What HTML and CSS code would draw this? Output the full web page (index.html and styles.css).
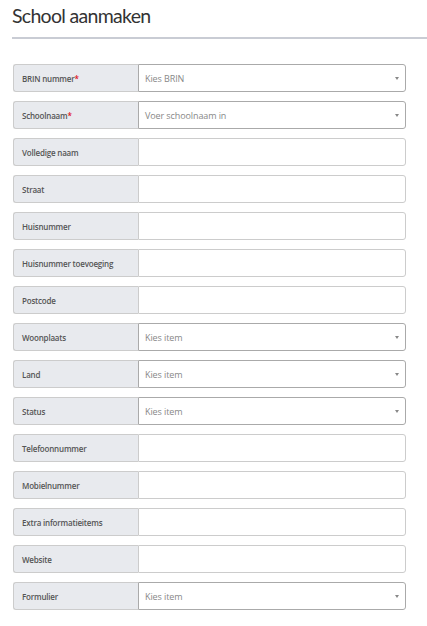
FILE: index.html
```html
<!DOCTYPE html>
<html lang="nl">
<head>
<meta charset="utf-8">
<title>School aanmaken</title>
<link rel="stylesheet" href="styles.css">
</head>
<body>
<div class="page">
  <h1 class="title">School aanmaken</h1>
  <div class="rule"></div>
  <form class="form">
    <div class="row"><div class="label">BRIN nummer<span class="req">*</span></div><div class="field select"><span class="ph">Kies BRIN</span><span class="caret"></span></div></div>
    <div class="row"><div class="label">Schoolnaam<span class="req">*</span></div><div class="field select"><span class="ph">Voer schoolnaam in</span><span class="caret"></span></div></div>
    <div class="row"><div class="label">Volledige naam</div><div class="field"></div></div>
    <div class="row"><div class="label">Straat</div><div class="field"></div></div>
    <div class="row"><div class="label">Huisnummer</div><div class="field"></div></div>
    <div class="row"><div class="label">Huisnummer toevoeging</div><div class="field"></div></div>
    <div class="row"><div class="label">Postcode</div><div class="field"></div></div>
    <div class="row"><div class="label">Woonplaats</div><div class="field select"><span class="ph">Kies item</span><span class="caret"></span></div></div>
    <div class="row"><div class="label">Land</div><div class="field select"><span class="ph">Kies item</span><span class="caret"></span></div></div>
    <div class="row"><div class="label">Status</div><div class="field select"><span class="ph">Kies item</span><span class="caret"></span></div></div>
    <div class="row"><div class="label">Telefoonnummer</div><div class="field"></div></div>
    <div class="row"><div class="label">Mobielnummer</div><div class="field"></div></div>
    <div class="row"><div class="label">Extra informatieitems</div><div class="field"></div></div>
    <div class="row"><div class="label">Website</div><div class="field"></div></div>
    <div class="row"><div class="label">Formulier</div><div class="field select"><span class="ph">Kies item</span><span class="caret"></span></div></div>
  </form>
</div>
</body>
</html>
```
FILE: styles.css
```css
html, body {
  margin: 0;
  padding: 0;
  background: #ffffff;
}
body {
  font-family: "Open Sans", "Noto Sans", sans-serif;
  color: #333333;
}
.page {
  padding: 0 0 0 12px;
}
.title {
  margin: 0;
  padding-top: 2px;
  font-family: Lato, "Open Sans", sans-serif;
  font-size: 19.5px;
  font-weight: 400;
  line-height: 27px;
  letter-spacing: -0.7px;
  color: #333333;
}
.rule {
  margin-top: 8px;
  height: 2px;
  background: #c9ccd4;
}
.form {
  margin: 25px 0 0 1px;
  width: 393px;
  display: flex;
  flex-direction: column;
  gap: 9px;
}
.row {
  display: flex;
  height: 28px;
}
.label {
  box-sizing: border-box;
  width: 125px;
  flex: none;
  background: #e8eaee;
  border: 1px solid #cccccc;
  border-right: none;
  border-radius: 3px 0 0 3px;
  padding: 1px 0 0 8px;
  display: flex;
  align-items: center;
  font-size: 8px;
  font-weight: 600;
  letter-spacing: -0.2px;
  color: #555555;
  white-space: nowrap;
}
.req {
  color: #e0141e;
}
.field {
  box-sizing: border-box;
  flex: 1;
  border: 1px solid #cccccc;
  border-radius: 0 3px 3px 0;
  background: #ffffff;
  display: flex;
  align-items: center;
  padding: 1px 6px 0 6px;
}
.select {
  border-color: #aaaaaa;
  justify-content: space-between;
}
.ph {
  font-size: 9px;
  letter-spacing: -0.1px;
  color: #888888;
}
.caret {
  width: 0;
  height: 0;
  border-left: 2.5px solid transparent;
  border-right: 2.5px solid transparent;
  border-top: 3px solid #888888;
}
```
